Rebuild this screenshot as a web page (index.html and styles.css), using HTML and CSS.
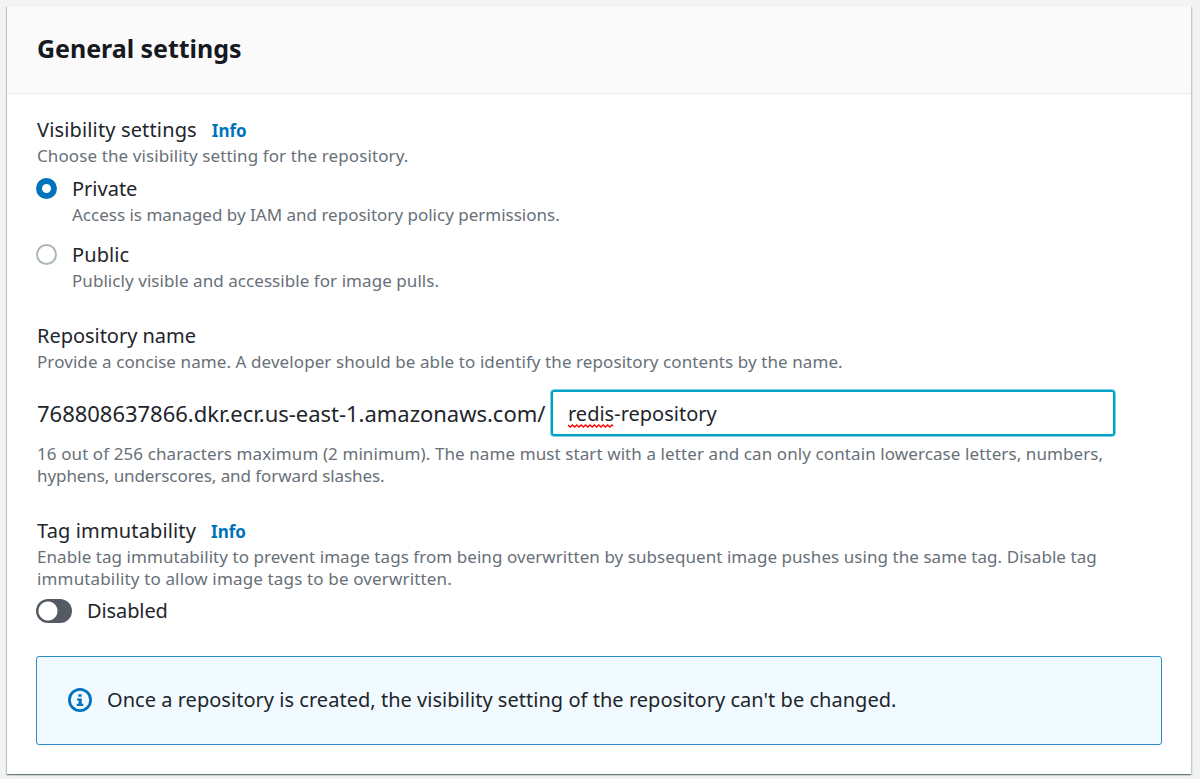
FILE: index.html
```html
<!DOCTYPE html>
<html lang="en">
<head>
<meta charset="utf-8">
<title>General settings</title>
<link rel="stylesheet" href="styles.css">
</head>
<body>
<main class="card">
  <header class="card-header"><h2 class="title">General settings</h2></header>
  <div class="card-body">
    <section class="field visibility">
      <div class="label-row"><span class="label label-visibility">Visibility settings</span><a class="info">Info</a></div>
      <p class="hint hint-visibility">Choose the visibility setting for the repository.</p>
      <div class="option">
        <span class="radio radio-checked"></span>
        <div><div class="label label-private">Private</div><p class="hint hint-private">Access is managed by IAM and repository policy permissions.</p></div>
      </div>
      <div class="option option-public">
        <span class="radio"></span>
        <div><div class="label label-public">Public</div><p class="hint hint-public">Publicly visible and accessible for image pulls.</p></div>
      </div>
    </section>
    <section class="field repository">
      <div class="label label-repository">Repository name</div>
      <p class="hint hint-repository">Provide a concise name. A developer should be able to identify the repository contents by the name.</p>
      <div class="name-row">
        <span class="registry">768808637866.dkr.ecr.us-east-1.amazonaws.com/</span>
        <div class="input"><span class="misspelled">redis<svg class="squiggle" width="46" height="4" viewBox="0 0 46 4"><path d="M0 1 L2.2 3 L4.4 1 L6.6 3 L8.8 1 L11 3 L13.2 1 L15.4 3 L17.6 1 L19.8 3 L22 1 L24.2 3 L26.4 1 L28.6 3 L30.8 1 L33 3 L35.2 1 L37.4 3 L39.6 1 L41.8 3 L44 1 L45 2" fill="none" stroke="#f00" stroke-width="1.3"/></svg></span>-repository</div>
      </div>
      <p class="hint hint-limit-a">16 out of 256 characters maximum (2 minimum). The name must start with a letter and can only contain lowercase letters, numbers,</p>
      <p class="hint hint-limit-b">hyphens, underscores, and forward slashes.</p>
    </section>
    <section class="field immutability">
      <div class="label-row"><span class="label label-tag">Tag immutability</span><a class="info">Info</a></div>
      <p class="hint hint-tag-a">Enable tag immutability to prevent image tags from being overwritten by subsequent image pushes using the same tag. Disable tag</p>
      <p class="hint hint-tag-b">immutability to allow image tags to be overwritten.</p>
      <div class="toggle-row"><span class="toggle"></span><span class="label label-disabled">Disabled</span></div>
    </section>
    <div class="alert">
      <svg class="alert-icon" width="24" height="24" viewBox="0 0 24 24"><circle cx="12" cy="12" r="10.6" fill="none" stroke="#0073bb" stroke-width="2.7"/><path d="M10.3 6.2h3.4v2.6h-3.4z M9 10.4h4.7v5.3h1.5v2.2H8.8v-2.2h1.8v-3.1H9z" fill="#0073bb"/></svg>
      <span class="alert-text">Once a repository is created, the visibility setting of the repository can't be changed.</span>
    </div>
  </div>
</main>
</body>
</html>
```
FILE: styles.css
```css
* { box-sizing: border-box; }
body { margin: 0; height: 779px; overflow: hidden; padding: 6px 9px 5px 7px; background: #f2f3f3; color: #22252c; font-family: "Noto Sans", sans-serif; }
p, h2 { margin: 0; }
.card { height: 768px; background: #fff; box-shadow: 0 1px 1px rgba(0,28,36,.4), 1px 1px 2px rgba(0,28,36,.2), -1px 1px 1px rgba(0,28,36,.15); }
.card-header { height: 88px; padding: 24px 30px; background: #fafafa; border-bottom: 1px solid #eaeded; }
.title { font-size: 25px; line-height: 36px; font-weight: 700; white-space: nowrap; color: #16191f; letter-spacing: -.03px; }
.card-body { padding: 22px 30px 0; }
.label-row { display: flex; gap: 15px; height: 28px; }
.label { font-size: 20px; line-height: 28px; white-space: nowrap; }
.label-visibility { letter-spacing: .15px; }
.label-repository { letter-spacing: -.03px; }
.label-public { letter-spacing: .1px; }
.label-tag { letter-spacing: .14px; }
.label-disabled { letter-spacing: -.1px; }
.info { font-size: 17px; line-height: 30px; font-weight: 700; color: #0073bb; }
.hint { font-size: 17px; line-height: 22px; color: #687078; white-space: nowrap; padding-top: 1px; height: 22px; }
.hint-visibility { letter-spacing: .1px; }
.hint-public { letter-spacing: .06px; }
.hint-repository { letter-spacing: .086px; }
.hint-limit-a { margin-top: 6px; letter-spacing: .094px; }
.hint-limit-b { letter-spacing: -.08px; }
.hint-tag-a { letter-spacing: .06px; }
.hint-tag-b { letter-spacing: .15px; }
.option { display: flex; gap: 15px; margin: 9px 0 0 -1px; }
.option-public { margin-top: 16px; }
.radio { width: 21px; height: 21px; margin-top: 3px; border: 2px solid #aab7b8; border-radius: 50%; }
.radio-checked { border: 6px solid #0073bb; }
.repository { margin-top: 31px; }
.name-row { display: flex; align-items: center; height: 47px; margin-top: 17px; }
.registry { width: 514px; font-size: 22px; white-space: nowrap; letter-spacing: -.02px; }
.input { width: 564px; height: 46px; border: 2px solid #00a1c9; border-radius: 3px; box-shadow: 0 0 0 .5px #00a1c9; padding: 1px 15px 0; font-size: 20px; line-height: 42px; white-space: nowrap; }
.misspelled { position: relative; }
.squiggle { position: absolute; left: 0; bottom: -1px; }
.immutability { margin-top: 31px; }
.toggle-row { display: flex; gap: 15px; margin: 8px 0 0 -1px; }
.toggle { width: 36px; height: 24px; margin-top: 2px; border-radius: 12px; background: radial-gradient(circle at 12px 12px, #fff 9px, #545b64 10px); }
.alert { display: flex; align-items: center; gap: 15px; width: 1126px; height: 89px; margin: 31px 0 0 -1px; padding: 0 31px 1px; border: 1px solid #2a8cc8; border-radius: 3px; background: #f1faff; }
.alert-text { padding-bottom: 2px; font-size: 20px; white-space: nowrap; letter-spacing: .03px; }
```
